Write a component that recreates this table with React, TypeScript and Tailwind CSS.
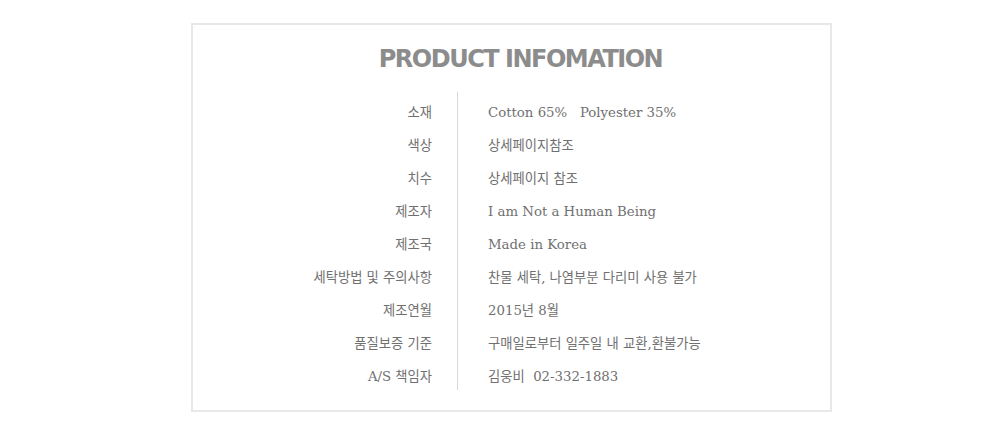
const rows: [string, string][] = [
  ['소재', 'Cotton 65%\u00a0\u00a0 Polyester 35%'],
  ['색상', '상세페이지참조'],
  ['치수', '상세페이지 참조'],
  ['제조자', 'I am Not a Human Being'],
  ['제조국', 'Made in Korea'],
  ['세탁방법 및 주의사항', '찬물 세탁, 나염부분 다리미 사용 불가'],
  ['제조연월', '2015년 8월'],
  ['품질보증 기준', '구매일로부터 일주일 내 교환,환불가능'],
  ['A/S 책임자', '김웅비\u00a0 02-332-1883'],
];

export default function App() {
  return (
    <div className="w-[1000px] h-[445px] bg-white overflow-hidden">
      <div className="ml-[191px] mt-[23px] w-[641px] h-[389px] border-2 border-[#e8e8e8] box-border">
        <h1
          className="pt-[18px] pl-[18px] text-center text-[24px] leading-[32px] font-bold text-[#8c8c8c] tracking-[-1.5px]"
          style={{ fontFamily: '"DejaVu Sans", sans-serif' }}
        >
          PRODUCT INFOMATION
        </h1>
        <div
          className="mt-[17px] flex text-[13.3px] text-[#707070]"
          style={{ fontFamily: '"DejaVu Serif", "Noto Sans CJK KR", serif' }}
        >
          <div className="w-[239px] pt-[4px] text-right">
            {rows.map(([label]) => (
              <div key={label} className="h-[33px] leading-[33px]">
                {label}
              </div>
            ))}
          </div>
          <div className="ml-[25px] border-l border-[#d8d8d8] pl-[30px] pt-[4px] h-[298px]">
            {rows.map(([label, value]) => (
              <div key={label} className="h-[33px] leading-[33px] whitespace-pre">
                {value}
              </div>
            ))}
          </div>
        </div>
      </div>
    </div>
  );
}
